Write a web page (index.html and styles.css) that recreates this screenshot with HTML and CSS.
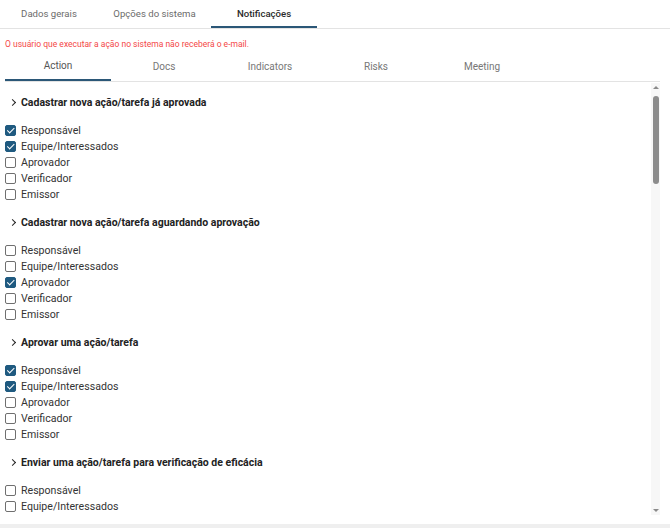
FILE: index.html
```html
<!DOCTYPE html>
<html lang="pt">
<head>
<meta charset="utf-8">
<link rel="stylesheet" href="styles.css">
</head>
<body>
<div class="page">
  <div class="top-tabs">
    <div class="top-tab t1">Dados gerais</div>
    <div class="top-tab t2">Opções do sistema</div>
    <div class="top-tab t3 active">Notificações</div>
  </div>
  <div class="msg">O usuário que executar a ação no sistema não receberá o e-mail.</div>
  <div class="inner">
    <div class="sub-tabs">
      <div class="sub-tab active">Action</div>
      <div class="sub-tab">Docs</div>
      <div class="sub-tab">Indicators</div>
      <div class="sub-tab">Risks</div>
      <div class="sub-tab">Meeting</div>
    </div>
    <div class="scroll-area">
      <div class="list">
        <div class="section">
          <div class="sec-head"><span class="chev"></span>Cadastrar nova ação/tarefa já aprovada</div>
          <div class="rows">
            <div class="row"><span class="cb on"></span>Responsável</div>
            <div class="row"><span class="cb on"></span>Equipe/Interessados</div>
            <div class="row"><span class="cb"></span>Aprovador</div>
            <div class="row"><span class="cb"></span>Verificador</div>
            <div class="row"><span class="cb"></span>Emissor</div>
          </div>
        </div>
        <div class="section">
          <div class="sec-head"><span class="chev"></span>Cadastrar nova ação/tarefa aguardando aprovação</div>
          <div class="rows">
            <div class="row"><span class="cb"></span>Responsável</div>
            <div class="row"><span class="cb"></span>Equipe/Interessados</div>
            <div class="row"><span class="cb on"></span>Aprovador</div>
            <div class="row"><span class="cb"></span>Verificador</div>
            <div class="row"><span class="cb"></span>Emissor</div>
          </div>
        </div>
        <div class="section">
          <div class="sec-head"><span class="chev"></span>Aprovar uma ação/tarefa</div>
          <div class="rows">
            <div class="row"><span class="cb on"></span>Responsável</div>
            <div class="row"><span class="cb on"></span>Equipe/Interessados</div>
            <div class="row"><span class="cb"></span>Aprovador</div>
            <div class="row"><span class="cb"></span>Verificador</div>
            <div class="row"><span class="cb"></span>Emissor</div>
          </div>
        </div>
        <div class="section">
          <div class="sec-head"><span class="chev"></span>Enviar uma ação/tarefa para verificação de eficácia</div>
          <div class="rows">
            <div class="row"><span class="cb"></span>Responsável</div>
            <div class="row"><span class="cb"></span>Equipe/Interessados</div>
          </div>
        </div>
      </div>
      <div class="scrollbar">
        <span class="arrow up"></span>
        <div class="track"><div class="thumb"></div></div>
        <span class="arrow down"></span>
      </div>
    </div>
  </div>
  <div class="footer"></div>
</div>
</body>
</html>
```

FILE: styles.css
```css
html, body {
  margin: 0;
  padding: 0;
  background: #ffffff;
}
body {
  font-family: Roboto, "Liberation Sans", sans-serif;
  color: #333333;
}
.page {
  width: 670px;
  height: 528px;
  display: flex;
  flex-direction: column;
  overflow: hidden;
}
.top-tabs {
  display: flex;
  height: 28px;
  border-bottom: 1px solid #e3e3e3;
  box-sizing: content-box;
}
.top-tab {
  height: 28px;
  box-sizing: border-box;
  display: flex;
  align-items: center;
  justify-content: center;
  font-size: 9.6px;
  color: #6b6b6b;
  padding-bottom: 2px;
}
.t1 { width: 98px; }
.t2 { width: 113px; }
.t3 { width: 106px; }
.top-tab.active {
  color: #2a2a2a;
  font-weight: 500;
  border-bottom: 2px solid #2b5777;
  padding-bottom: 0;
}
.msg {
  color: #f44747;
  font-size: 8.5px;
  padding: 10px 0 0 5px;
  height: 11px;
  line-height: 11px;
}
.inner {
  padding: 0 10px 0 5px;
  display: flex;
  flex-direction: column;
  flex: 1;
  min-height: 0;
}
.sub-tabs {
  display: flex;
  border-bottom: 1px solid #e3e3e3;
  height: 31px;
  box-sizing: content-box;
}
.sub-tab {
  width: 106px;
  height: 31px;
  box-sizing: border-box;
  display: flex;
  align-items: center;
  justify-content: center;
  font-size: 10px;
  color: #777777;
  padding-top: 1px;
}
.sub-tab.active {
  color: #555555;
  border-bottom: 2px solid #2b5777;
}
.scroll-area {
  display: flex;
  height: 432px;
  margin-top: 1px;
}
.list {
  flex: 1;
  overflow: hidden;
  padding-top: 11px;
}
.section {
  margin-bottom: 12px;
}
.sec-head {
  display: flex;
  align-items: center;
  height: 16px;
  font-size: 10.5px;
  font-weight: 700;
  color: #222222;
  padding-left: 5px;
}
.chev {
  width: 4px;
  height: 4px;
  border-right: 1.3px solid #222;
  border-top: 1.3px solid #222;
  transform: rotate(45deg);
  margin-right: 6px;
}
.rows {
  margin-top: 12px;
}
.row {
  height: 16px;
  display: flex;
  align-items: center;
  font-size: 10.6px;
  color: #333333;
}
.cb {
  width: 11px;
  height: 11px;
  box-sizing: border-box;
  border: 1.2px solid #6f6f6f;
  border-radius: 2px;
  margin-right: 5px;
  position: relative;
  flex: none;
}
.cb.on {
  background: #1f5a80;
  border-color: #1f5a80;
}
.cb.on::after {
  content: "";
  position: absolute;
  left: 3px;
  top: 0.5px;
  width: 2.5px;
  height: 5.5px;
  border-right: 1.3px solid #fff;
  border-bottom: 1.3px solid #fff;
  transform: rotate(45deg);
}
.scrollbar {
  width: 9px;
  background: #f7f7f7;
  display: flex;
  flex-direction: column;
  align-items: center;
  padding: 3px 0;
  box-sizing: border-box;
}
.arrow {
  width: 0;
  height: 0;
  border-left: 3px solid transparent;
  border-right: 3px solid transparent;
  flex: none;
}
.arrow.up {
  border-bottom: 3px solid #8a8a8a;
}
.arrow.down {
  border-top: 3px solid #8a8a8a;
}
.track {
  flex: 1;
  width: 100%;
  display: flex;
  justify-content: center;
  padding-top: 7px;
}
.thumb {
  width: 6px;
  height: 88px;
  border-radius: 3px;
  background: #8c8c8c;
}
.footer {
  height: 4px;
  margin-top: auto;
  background: #efefef;
}
```
